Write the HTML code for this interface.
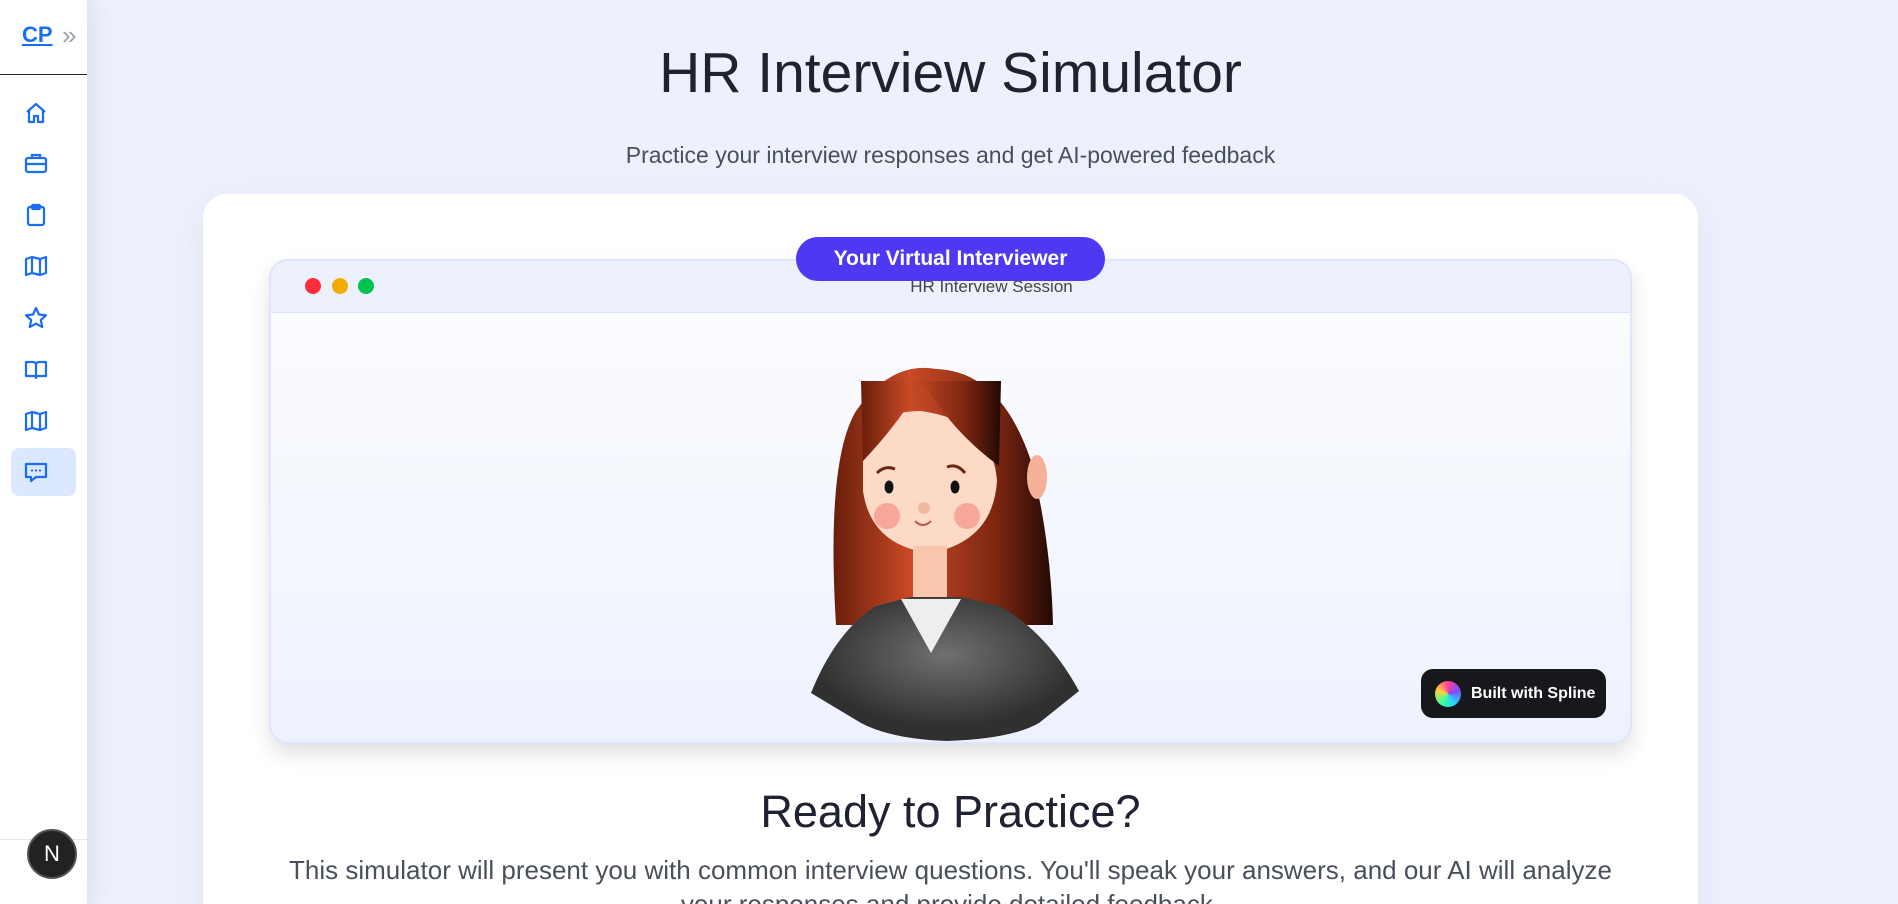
<!DOCTYPE html>
<html style="width:1898px;height:904px;overflow:hidden"><head><meta charset="utf-8"><style>
*{box-sizing:border-box;margin:0;padding:0}
body{width:1898px;height:904px;overflow:hidden;background:#edf1fc;font-family:"Liberation Sans",sans-serif;position:relative}
.sb{position:absolute;left:0;top:0;width:87px;height:904px;background:#fff;box-shadow:4px 0 24px rgba(60,70,120,.12);z-index:2}
.cp{position:absolute;left:22px;top:22px;font-size:22px;font-weight:bold;color:#1a6ef5;text-decoration:underline}
.chev{position:absolute;left:62px;top:20px;color:#9aa0ab;font-size:26px}
.div{position:absolute;left:0;top:74px;width:87px;height:1px;background:#222}
.ic{position:absolute;left:24px;width:24px;height:24px}
.act{position:absolute;left:11px;top:448px;width:65px;height:48px;background:#dbe8fd;border-radius:8px}
.c{position:absolute;left:203px;width:1495px;text-align:center}
h1{top:40px;font-size:57px;font-weight:normal;color:#1f2230}
.sub{top:142px;font-size:23px;color:#4a4f5c}
.card{position:absolute;left:203px;top:194px;width:1495px;height:760px;background:#fff;border-radius:24px;box-shadow:0 10px 40px rgba(80,90,150,.08)}
.win{position:absolute;left:269px;top:259px;width:1363px;height:485px;border:2px solid #dfe5fb;border-radius:19px;overflow:hidden;background:linear-gradient(#fcfdff,#eef2fe);box-shadow:0 10px 20px rgba(0,0,0,.12)}
.hd{height:52px;background:#edf1fd;border-bottom:1px solid #dde4fa;position:relative}
.dot{position:absolute;top:17px;width:16px;height:16px;border-radius:50%}
.sess{position:absolute;left:0;right:0;top:16px;text-align:center;font-size:17px;color:#444;padding-left:82px}
.badge{position:absolute;left:796px;top:237px;width:309px;height:44px;background:#4f38f2;border-radius:22px;color:#fff;font-weight:bold;font-size:21px;text-align:center;line-height:44px;z-index:3}
.spl{position:absolute;left:1150px;top:408px;width:185px;height:49px;background:#17181c;border-radius:12px;color:#fff;font-size:16px;font-weight:bold;line-height:49px;padding-left:50px}
.spl i{position:absolute;left:14px;top:12px;width:26px;height:26px;border-radius:50%;background:conic-gradient(#ff3d9a,#7b4dff,#2ad2ff,#3dff9a,#ffd23d,#ff3d9a)}
.rdy{top:786px;font-size:45px;color:#1f2230}
.p{top:853px;font-size:26px;color:#4a4f5c;line-height:34px}
.bd{position:absolute;left:0;top:839px;width:87px;height:1px;background:#e5e7eb}
.n{position:absolute;left:27px;top:829px;width:50px;height:50px;border-radius:50%;background:#222;border:2px solid #555;color:#fff;font-size:22px;text-align:center;line-height:46px;z-index:3}
</style></head><body>
<div class="sb">
<div class="cp">CP</div><div class="chev">»</div>
<div class="div"></div>
<div class="act"></div>
<svg class="ic" style="top:101px" viewBox="0 0 24 24" fill="none" stroke="#1a6ef5" stroke-width="2.2" stroke-linejoin="round"><path d="M3 11L12 3l9 8M5 9.5V21h5v-6h4v6h5V9.5"/></svg>
<svg class="ic" style="top:151px" viewBox="0 0 24 24" fill="none" stroke="#1a6ef5" stroke-width="2.2"><rect x="2" y="7" width="20" height="14" rx="2"/><path d="M8 7V4h8v3M2 13h20"/></svg>
<svg class="ic" style="top:203px" viewBox="0 0 24 24" fill="none" stroke="#1a6ef5" stroke-width="2.2"><rect x="4" y="4" width="16" height="18" rx="2"/><rect x="8" y="2" width="8" height="4" rx="1"/></svg>
<svg class="ic" style="top:254px" viewBox="0 0 24 24" fill="none" stroke="#1a6ef5" stroke-width="2.2" stroke-linejoin="round"><path d="M2 5l6-2 8 2 6-2v16l-6 2-8-2-6 2zM8 3v16M16 5v16"/></svg>
<svg class="ic" style="top:306px" viewBox="0 0 24 24" fill="none" stroke="#1a6ef5" stroke-width="2.2" stroke-linejoin="round"><path d="M12 2l3 6.5 7 .8-5.2 4.8 1.5 7L12 17.6 5.7 21.1l1.5-7L2 9.3l7-.8z"/></svg>
<svg class="ic" style="top:357px" viewBox="0 0 24 24" fill="none" stroke="#1a6ef5" stroke-width="2.2" stroke-linejoin="round"><path d="M2 5h7a3 3 0 013 3v13a2 2 0 00-2-2H2zM22 5h-7a3 3 0 00-3 3v13a2 2 0 012-2h8z"/></svg>
<svg class="ic" style="top:409px" viewBox="0 0 24 24" fill="none" stroke="#1a6ef5" stroke-width="2.2" stroke-linejoin="round"><path d="M2 5l6-2 8 2 6-2v16l-6 2-8-2-6 2zM8 3v16M16 5v16"/></svg>
<svg class="ic" style="top:460px" viewBox="0 0 24 24" fill="none" stroke="#1a6ef5" stroke-width="2.2" stroke-linejoin="round"><path d="M2 4h20v13H12l-5 4v-4H2z"/><path d="M8 10.5h.01M12 10.5h.01M16 10.5h.01" stroke-linecap="round"/></svg>
<div class="bd"></div>
</div>
<div class="n">N</div>
<h1 class="c">HR Interview Simulator</h1>
<div class="c sub">Practice your interview responses and get AI-powered feedback</div>
<div class="card"></div>
<div class="badge">Your Virtual Interviewer</div>
<div class="win">
<div class="hd"><div class="dot" style="left:34px;background:#ff2d3a"></div><div class="dot" style="left:61px;background:#f0ad00"></div><div class="dot" style="left:87px;background:#00c44e"></div><div class="sess">HR Interview Session</div></div>
<svg style="position:absolute;left:0;top:0" width="1363" height="485" viewBox="0 0 1363 485">
<defs><linearGradient id="h" x1="0" x2="1"><stop offset="0" stop-color="#6a1e0c"/><stop offset=".35" stop-color="#c94a26"/><stop offset=".75" stop-color="#7a2510"/><stop offset="1" stop-color="#220904"/></linearGradient>
<radialGradient id="s" cx=".5" cy=".4"><stop offset="0" stop-color="#707070"/><stop offset="1" stop-color="#303030"/></radialGradient></defs>
<path d="M565 364 Q555 200 585 150 Q620 100 665 108 Q730 110 760 200 Q780 280 782 364 Z" fill="url(#h)"/>
<ellipse cx="766" cy="216" rx="10" ry="22" fill="#f4b197"/>
<path d="M592 200 Q595 150 650 150 Q722 160 726 220 Q722 280 660 292 Q600 285 592 230 Z" fill="#fcdac6"/>
<path d="M592 200 Q630 160 652 120 Q680 170 728 205 L730 120 L590 120Z" fill="url(#h)"/>
<rect x="642" y="285" width="34" height="55" fill="#f7c6ad"/>
<circle cx="616" cy="255" r="13" fill="#f59a8e" opacity=".8"/><circle cx="696" cy="255" r="13" fill="#f59a8e" opacity=".8"/>
<ellipse cx="618" cy="226" rx="4.5" ry="6.5" fill="#111"/><ellipse cx="684" cy="226" rx="4.5" ry="6.5" fill="#111"/>
<circle cx="653" cy="247" r="6" fill="#f0b9a0"/>
<path d="M644 260 Q652 268 660 260" stroke="#c2555a" stroke-width="2" fill="none"/>
<path d="M606 212 Q614 204 624 208M676 206 Q686 202 694 212" stroke="#6a2810" stroke-width="3" fill="none"/>
<path d="M540 432 Q565 370 605 345 L640 336 L690 336 L728 345 Q775 370 808 430 L768 462 Q740 478 676 480 Q620 478 590 462 Z" fill="url(#s)"/>
<path d="M630 338 L660 392 L690 338 Z" fill="#eee"/>
</svg>
<div class="spl"><i></i>Built with Spline</div>
</div>
<div class="c rdy">Ready to Practice?</div>
<div class="c p">This simulator will present you with common interview questions. You'll speak your answers, and our AI will analyze<br>your responses and provide detailed feedback.</div>
</body></html>
